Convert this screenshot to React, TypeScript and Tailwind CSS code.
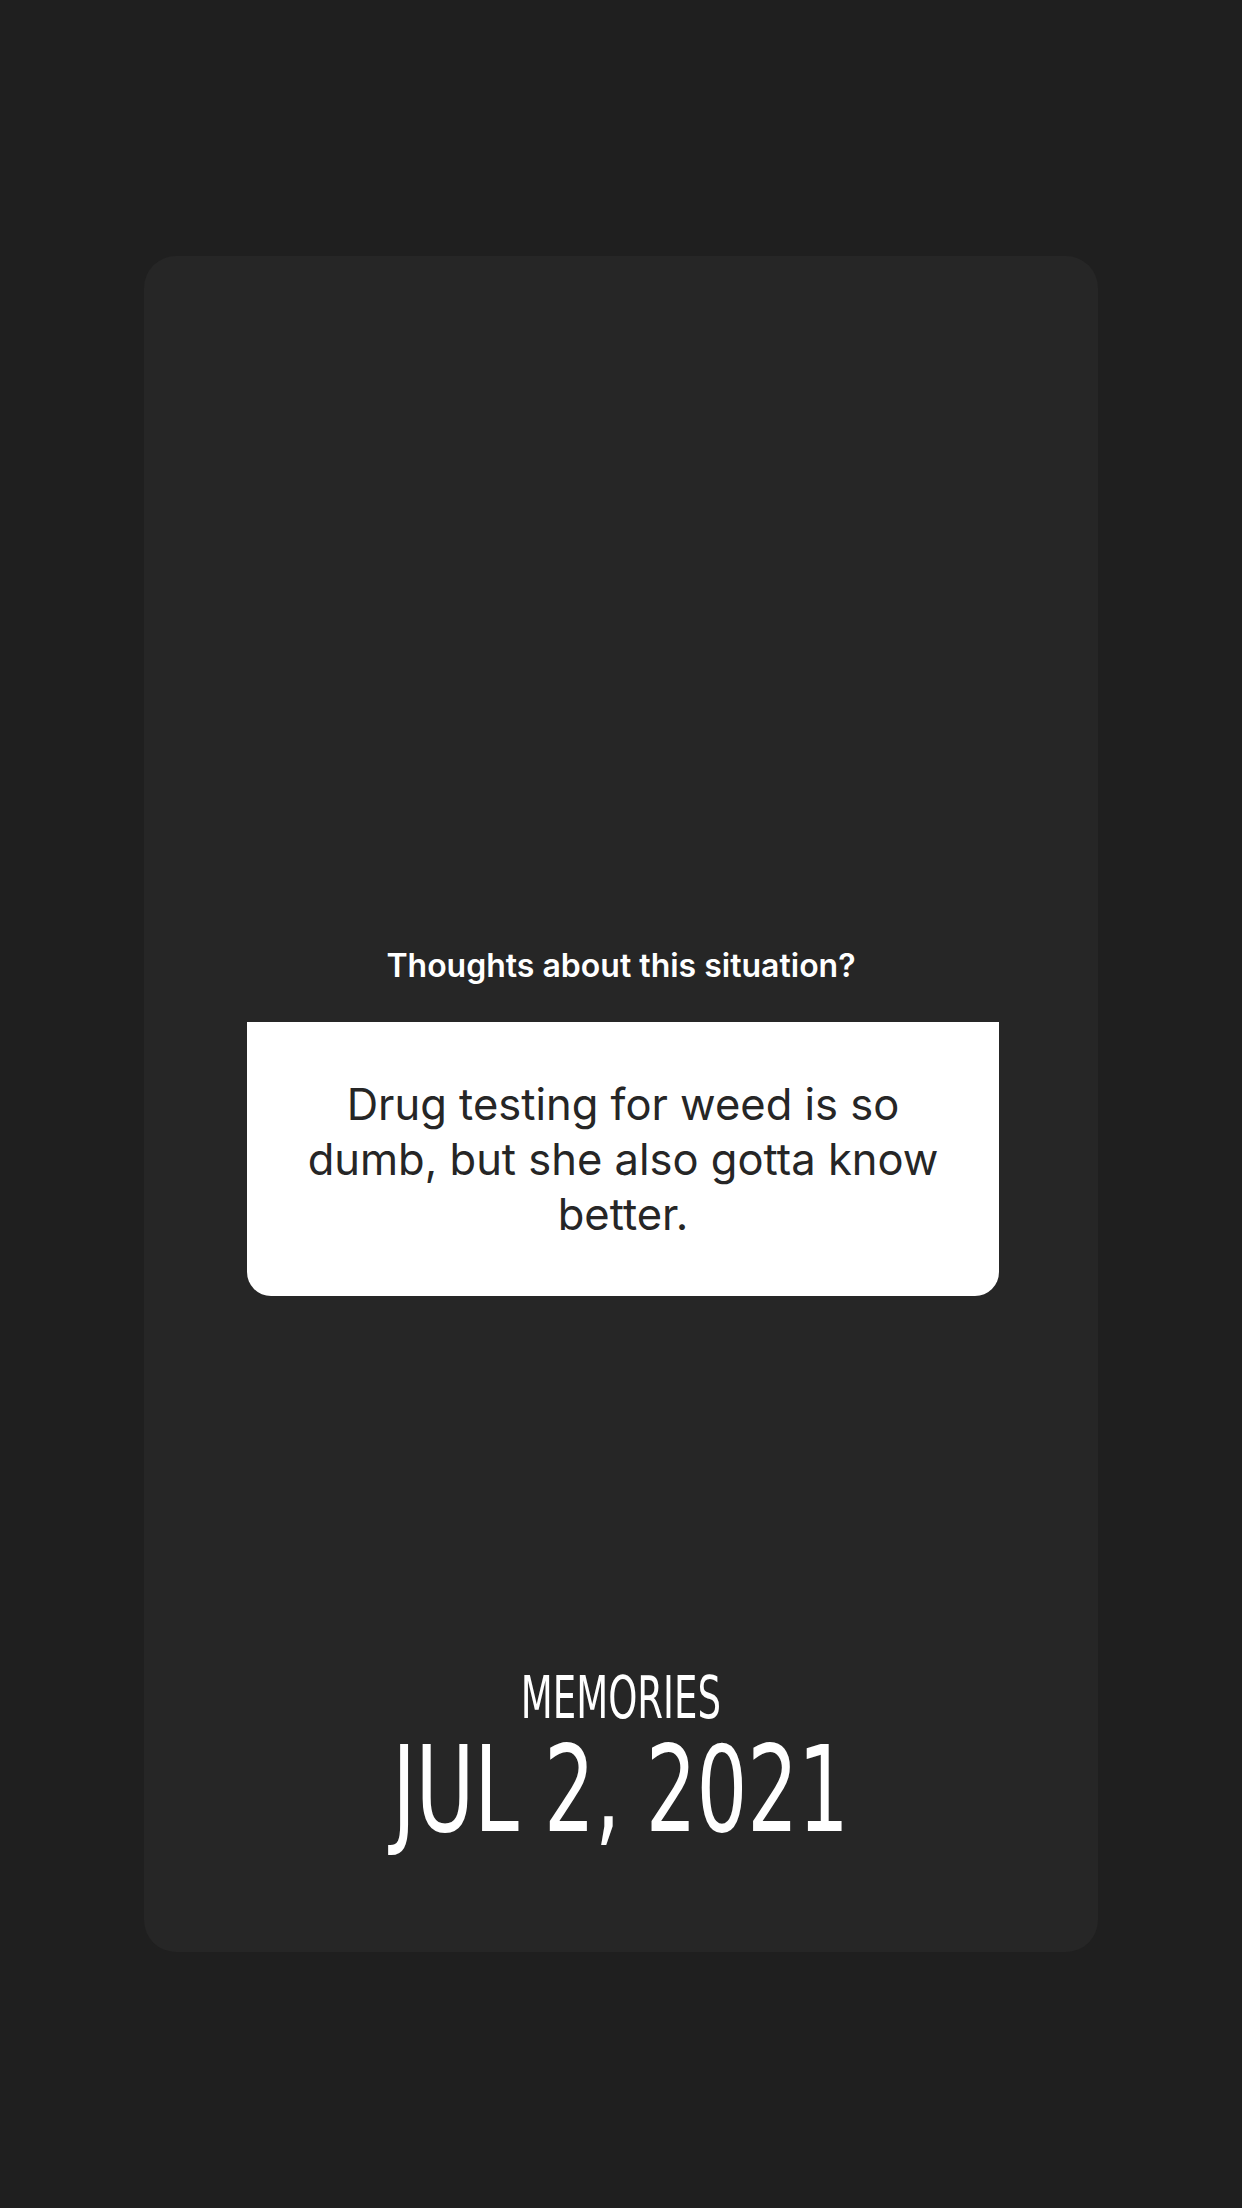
import React from 'react';

const App = () => {
  return (
    <div className="w-[1242px] h-[2208px] bg-[#1f1f1f] pt-[256px] overflow-hidden">
      <div className="mx-auto w-[954px] h-[1696px] rounded-[32px] bg-[#262626] flex flex-col items-center pt-[690px]">
        <p className="text-[32px] leading-[40px] font-semibold text-white font-['Inter',sans-serif]">
          Thoughts about this situation?
        </p>
        <div className="mt-[36px] ml-[4px] w-[752px] h-[274px] bg-white rounded-b-[24px] flex items-center justify-center px-[50px]">
          <p className="text-center text-[43.5px] leading-[55px] text-[#262626] font-['Inter',sans-serif]">
            Drug testing for weed is so dumb, but she also gotta know better.
          </p>
        </div>
        <div className="mt-[373px] flex flex-col items-center text-white font-['DejaVu_Sans_Condensed','Liberation_Sans_Narrow',sans-serif]">
          <span className="block text-[58px] leading-[58px] scale-x-[0.71]">MEMORIES</span>
          <span className="block mt-[4px] text-[120px] leading-[118px] font-light scale-x-[0.74]">JUL 2, 2021</span>
        </div>
      </div>
    </div>
  );
};

export default App;
